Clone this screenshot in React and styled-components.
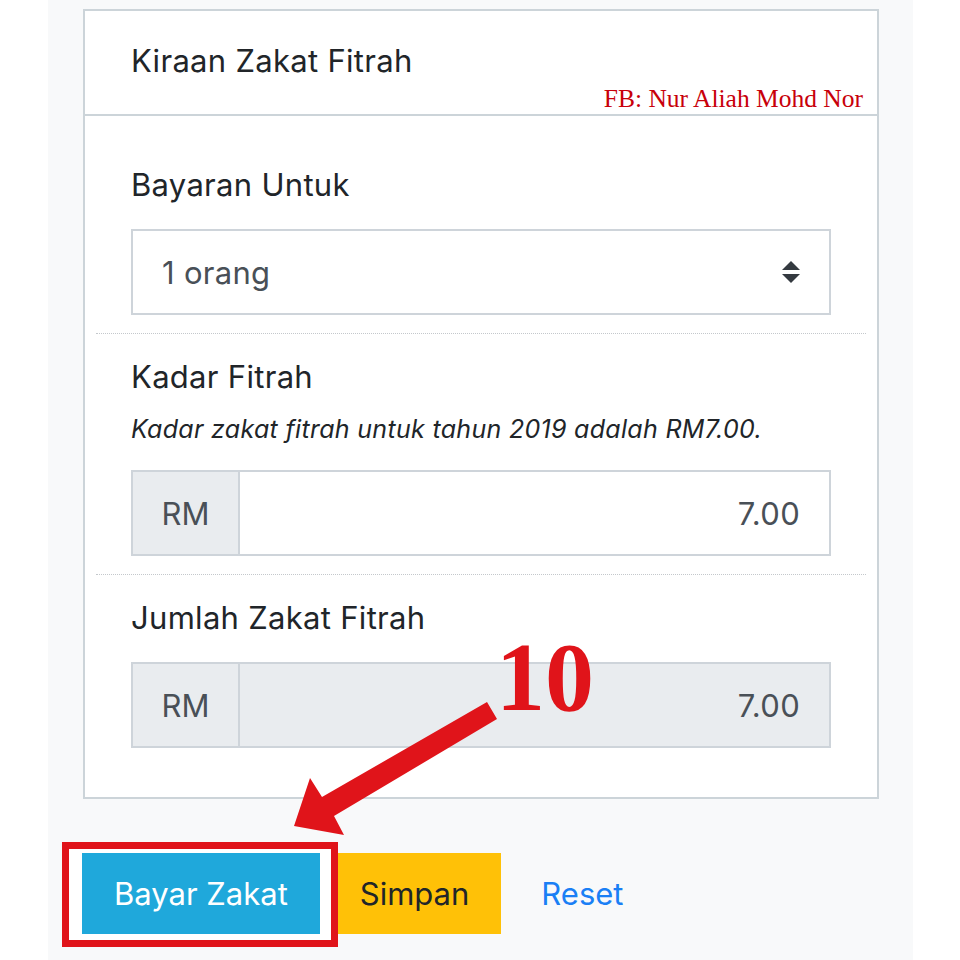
import React from "react";
import styled, { createGlobalStyle } from "styled-components";

const Global = createGlobalStyle`
  html, body { margin: 0; padding: 0; background: #fff; }
  body { font-family: Inter, "Noto Sans", sans-serif; color: #212529; }
`;

const Page = styled.div`
  position: relative;
  width: 960px;
  height: 960px;
  overflow: hidden;
  background: #fff;
`;

const Canvas = styled.div`
  margin: 0 47px 0 48px;
  height: 960px;
  background: #f8f9fa;
  padding-top: 9px;
  box-sizing: border-box;
`;

const Card = styled.div`
  position: relative;
  margin-left: 35px;
  width: 796px;
  box-sizing: border-box;
  border: 2px solid #ccd4d9;
  background: #fff;
`;

const CardHeader = styled.div`
  position: relative;
  padding: 27px 46px 31px;
  border-bottom: 2px solid #ccd4d9;
`;

const Title = styled.div`
  font-size: 31px;
  letter-spacing: 0.3px;
  line-height: 45px;
  color: #212529;
`;

const Watermark = styled.div`
  position: absolute;
  right: 14px;
  bottom: 0px;
  font-family: "Liberation Serif", "Times New Roman", serif;
  font-size: 25.5px;
  color: #c8000a;
`;

const CardBody = styled.div`
  padding: 26px 11px 31px;
`;

const Group = styled.div`
  padding: 20px 35px 18px;
  border-bottom: ${(p) => (p.last ? "none" : "1px dotted #c4c8cc")};
`;

const Label = styled.div`
  font-size: 31px;
  letter-spacing: 0.3px;
  line-height: 45px;
  color: #212529;
  margin-bottom: ${(p) => (p.tight ? "12px" : "22px")};
`;

const Help = styled.div`
  font-size: 25px;
  letter-spacing: 0.3px;
  line-height: 36px;
  font-style: italic;
  color: #212529;
  margin-bottom: 23px;
`;

const SelectBox = styled.div`
  height: 86px;
  box-sizing: border-box;
  border: 2px solid #ced4da;
  display: flex;
  align-items: center;
  justify-content: space-between;
  padding: 0 28px 0 29px;
  font-size: 31px;
  letter-spacing: 0.3px;
  color: #495057;
`;

const InputGroup = styled.div`
  display: flex;
  height: 86px;
  box-sizing: border-box;
  border: 2px solid #ced4da;
  background: ${(p) => (p.disabled ? "#e9ecef" : "#fff")};
`;

const Prefix = styled.div`
  width: 105px;
  flex: none;
  display: flex;
  align-items: center;
  justify-content: center;
  background: #e9ecef;
  border-right: 2px solid #ced4da;
  font-size: 31px;
  color: #495057;
`;

const Value = styled.div`
  flex: 1;
  display: flex;
  align-items: center;
  justify-content: flex-end;
  padding-right: 29px;
  font-size: 31px;
  letter-spacing: 0.3px;
  color: #495057;
`;

const ButtonRow = styled.div`
  position: relative;
  display: flex;
  gap: 8px;
  margin: 54px 0 0 34px;
`;

const Button = styled.div`
  position: relative;
  z-index: ${(p) => (p.top ? 2 : 0)};
  height: 81px;
  display: flex;
  align-items: center;
  padding: 0 32px;
  font-size: 31px;
  background: ${(p) => p.bg || "transparent"};
  color: ${(p) => p.fg};
`;

const Highlight = styled.div`
  position: absolute;
  z-index: 1;
  left: -20px;
  top: -11px;
  width: 276px;
  height: 105px;
  box-sizing: border-box;
  border: 7px solid #e0141a;
  background: #fff;
`;

const StepNumber = styled.div`
  position: absolute;
  left: 496px;
  top: 628px;
  font-family: "Liberation Serif", "Times New Roman", serif;
  font-weight: bold;
  font-size: 98px;
  line-height: 1;
  color: #e0141a;
  z-index: 5;
`;

const ArrowSvg = styled.svg`
  position: absolute;
  left: 0;
  top: 0;
  z-index: 5;
  pointer-events: none;
`;

const SortIcon = () => (
  <svg width="20" height="24" viewBox="0 0 20 24">
    <path d="M10 1 L19 10 L1 10 Z" fill="#343a40" />
    <path d="M1 14 L19 14 L10 23 Z" fill="#343a40" />
  </svg>
);

export default function App() {
  return (
    <Page>
      <Global />
      <Canvas>
        <Card>
          <CardHeader>
            <Title>Kiraan Zakat Fitrah</Title>
            <Watermark>FB: Nur Aliah Mohd Nor</Watermark>
          </CardHeader>
          <CardBody>
            <Group>
              <Label>Bayaran Untuk</Label>
              <SelectBox>
                <span>1 orang</span>
                <SortIcon />
              </SelectBox>
            </Group>
            <Group>
              <Label tight>Kadar Fitrah</Label>
              <Help>Kadar zakat fitrah untuk tahun 2019 adalah RM7.00.</Help>
              <InputGroup>
                <Prefix>RM</Prefix>
                <Value>7.00</Value>
              </InputGroup>
            </Group>
            <Group last>
              <Label>Jumlah Zakat Fitrah</Label>
              <InputGroup disabled>
                <Prefix>RM</Prefix>
                <Value>7.00</Value>
              </InputGroup>
            </Group>
          </CardBody>
        </Card>
        <ButtonRow>
          <Button top bg="#1fa8db" fg="#fff">Bayar Zakat</Button>
          <Button bg="#ffc107" fg="#212529">Simpan</Button>
          <Button fg="#1a7ff5">Reset</Button>
          <Highlight />
        </ButtonRow>
      </Canvas>
      <StepNumber>10</StepNumber>
      <ArrowSvg width="960" height="960" viewBox="0 0 960 960">
        <polygon
          points="487,702 497,719 334,816 344,835 294,826 310,778 322,797"
          fill="#e0141a"
        />
      </ArrowSvg>
    </Page>
  );
}
